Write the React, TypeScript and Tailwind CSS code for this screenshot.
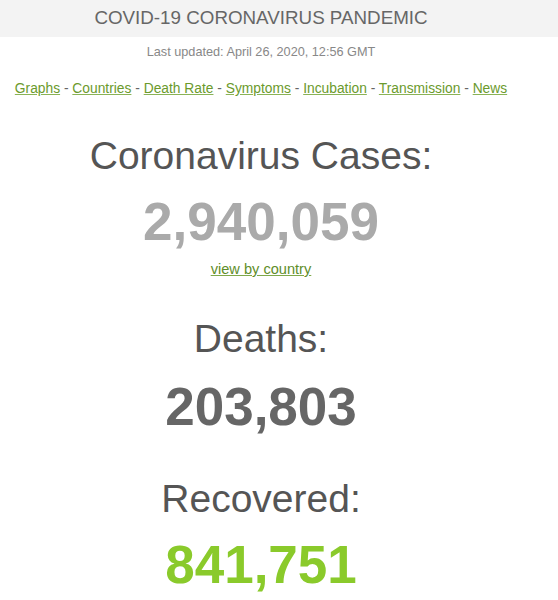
import React from 'react';

const NAV_LINKS = ['Graphs', 'Countries', 'Death Rate', 'Symptoms', 'Incubation', 'Transmission', 'News'];

type CounterProps = {
  label: string;
  value: string;
  valueClass: string;
  gapClass: string;
  topClass: string;
};

// one big label + number block
const Counter: React.FC<CounterProps> = ({ label, value, valueClass, gapClass, topClass }) => (
  <div className={topClass}>
    <h1 className="text-[39px] leading-[44px] text-[#555] font-normal">{label}</h1>
    <div className={`${gapClass} text-[53px] leading-[56px] font-bold ${valueClass}`}>{value}</div>
  </div>
);

export default function App() {
  return (
    <div
      className="w-[558px] h-[600px] bg-white overflow-hidden"
      style={{ fontFamily: '"Liberation Sans", Arial, sans-serif' }}
    >
      <div className="h-[37px] bg-[#f3f3f3]">
        <div className="w-[522px] text-center text-[18.8px] leading-[35px] text-[#666]">
          COVID-19 CORONAVIRUS PANDEMIC
        </div>
      </div>

      <div className="w-[522px] text-center">
        <div className="mt-[5px] text-[12.7px] leading-[20px] text-[#888]">
          Last updated: April 26, 2020, 12:56 GMT
        </div>

        <div className="mt-[17px] text-[13.8px] leading-[20px] text-[#666]">
          {NAV_LINKS.map((link, i) => (
            <React.Fragment key={link}>
              {i > 0 && ' - '}
              <a href="#" className="text-[#6b9a2c] underline decoration-[#8ab356]">
                {link}
              </a>
            </React.Fragment>
          ))}
        </div>

        <Counter
          topClass="mt-[35px]"
          label="Coronavirus Cases:"
          value="2,940,059"
          valueClass="text-[#aaa]"
          gapClass="mt-[16px]"
        />
        <div className="mt-[9px] text-[14.6px] leading-[20px]">
          <a href="#" className="text-[#5f8e2a] underline decoration-[#7fa84a]">
            view by country
          </a>
        </div>

        <Counter
          topClass="mt-[38px]"
          label="Deaths:"
          value="203,803"
          valueClass="text-[#666]"
          gapClass="mt-[18px]"
        />

        <Counter
          topClass="mt-[42px]"
          label="Recovered:"
          value="841,751"
          valueClass="text-[#8aca2b]"
          gapClass="mt-[16px]"
        />
      </div>
    </div>
  );
}
